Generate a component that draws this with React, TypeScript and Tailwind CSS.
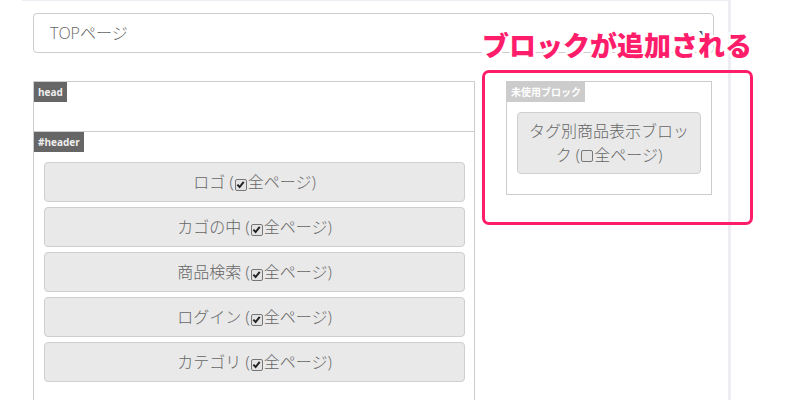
const font = "font-['Open_Sans','Noto_Sans_CJK_JP',sans-serif]";

const Check = ({ checked }: { checked: boolean }) => (
  <span className="inline-flex items-center justify-center w-[12px] h-[12px] border border-[#777] rounded-[2px] bg-[#e4e4e4] mx-[1px] align-[-1px]">
    {checked && (
      <svg viewBox="0 0 10 10" className="w-[9px] h-[9px]">
        <path d="M1.5 5.2 L4 7.8 L8.6 2.2" fill="none" stroke="#222" strokeWidth="2.2" />
      </svg>
    )}
  </span>
);

const BlockButton = ({ name, checked = true }: { name: string; checked?: boolean }) => (
  <div className="h-[40px] flex items-center justify-center border border-[#cfcfcf] rounded-[4px] bg-[#e9e9e9] text-[16px] font-light text-[#666]">
    <span>
      {name} (<Check checked={checked} />全ページ)
    </span>
  </div>
);

const Label = ({ text, dark = true }: { text: string; dark?: boolean }) => (
  <div
    className={`w-fit h-[20px] px-[4px] leading-[20px] font-bold ${
      dark ? "bg-[#666] text-[#eee] text-[10px]" : "bg-[#ccc] text-white text-[10px]"
    }`}
  >
    {text}
  </div>
);

const blocks = ["ロゴ", "カゴの中", "商品検索", "ログイン", "カテゴリ"];

export default function App() {
  return (
    <div className={`relative w-[798px] h-[400px] overflow-hidden bg-white ${font}`}>
      <div className="ml-[22px] w-[709px] h-full border-t border-r-[3px] border-[#ededf3] pl-[11px] pr-[14px] pt-[12px]">
        <div className="relative h-[40px] border border-[#ccc] rounded-[4px] flex items-center pl-[16px] text-[16px] font-light text-[#666]">
          TOPページ
          <span className="absolute right-[6px] top-[17px] w-0 h-0 border-l-[4px] border-r-[4px] border-t-[5px] border-l-transparent border-r-transparent border-t-[#555]" />
        </div>

        <div className="flex mt-[28px]">
          <div className="w-[442px] h-[400px] border border-[#ccc]">
            <div className="h-[50px] border-b border-[#ccc]">
              <Label text="head" />
            </div>
            <Label text="#header" />
            <div className="flex flex-col gap-[5px] mt-[10px] pl-[10px] pr-[9px]">
              {blocks.map((b) => (
                <BlockButton key={b} name={b} />
              ))}
            </div>
          </div>

          <div className="ml-[31px] w-[206px] h-[114px] border border-[#ccc] self-start">
            <Label text="未使用ブロック" dark={false} />
            <div className="mx-[10px] mt-[10px] h-[62px] flex items-center justify-center px-[8px] border border-[#cfcfcf] rounded-[4px] bg-[#e9e9e9] text-[16px] font-light leading-[24px] text-[#666] text-center">
              <span>
                タグ別商品表示ブロッ
                <br />
                ク (<Check checked={false} />全ページ)
              </span>
            </div>
          </div>
        </div>
      </div>

      <div className="absolute left-[482px] top-[28px] text-[27px] leading-[34px] font-black text-[#fd1d6b] font-['Noto_Sans_CJK_JP',sans-serif] [-webkit-text-stroke:5px_white] [paint-order:stroke_fill]">
        ブロックが追加される
      </div>
      <div className="absolute left-[482px] top-[70px] w-[271px] h-[155px] border-[3px] border-[#fd1d6b] rounded-[7px]" />
    </div>
  );
}
